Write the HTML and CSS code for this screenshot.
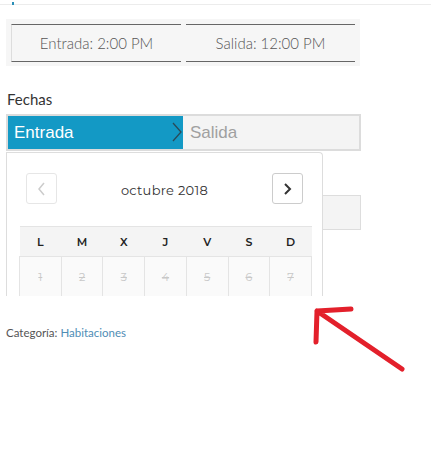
FILE: index.html
```html
<!DOCTYPE html>
<html lang="es">
<head>
<meta charset="utf-8">
<link rel="stylesheet" href="styles.css">
</head>
<body>
<div class="topbar"><span class="topmark"></span></div>
<div class="hours">
  <div class="hour">Entrada: 2:00 PM</div>
  <div class="hour">Salida: 12:00 PM</div>
</div>
<div class="form">
  <div class="label">Fechas</div>
  <div class="tabs">
    <div class="tab active">Entrada<svg class="chev" width="10" height="20" viewBox="0 0 10 20"><path d="M1 1 L9 10 L1 19" fill="none" stroke="#2a4a58" stroke-width="1.3"/></svg></div>
    <div class="tab">Salida</div>
    <div class="calendar">
      <div class="cal-head">
        <div class="nav disabled"><svg width="10" height="14" viewBox="0 0 10 14"><path d="M7 1 L2 7 L7 13" fill="none" stroke="#ccc" stroke-width="1.5"/></svg></div>
        <div class="month">octubre 2018</div>
        <div class="nav"><svg width="10" height="14" viewBox="0 0 10 14"><path d="M3 2 L8 7 L3 12" fill="none" stroke="#333" stroke-width="2"/></svg></div>
      </div>
      <table class="days">
        <thead><tr><th>L</th><th>M</th><th>X</th><th>J</th><th>V</th><th>S</th><th>D</th></tr></thead>
        <tbody>
          <tr><td>1</td><td>2</td><td>3</td><td>4</td><td>5</td><td>6</td><td>7</td></tr>
        </tbody>
      </table>
    </div>
  </div>
  <div class="field"></div>
  <div class="meta">Categoría: <a href="#">Habitaciones</a></div>
</div>
<svg class="arrow" width="120" height="90" viewBox="0 0 120 90"><path d="M28 72 L29 41 L63 39 M29 41 L114 99" fill="none" stroke="#e3202b" stroke-width="5" stroke-linecap="round" stroke-linejoin="round"/></svg>
</body>
</html>
```
FILE: styles.css
```css
html, body { margin: 0; padding: 0; background: #fff; }
body { font-family: "Lato", "Open Sans", sans-serif; color: #333; width: 431px; height: 459px; overflow: hidden; position: relative; }
.topbar { height: 4px; border-bottom: 1px solid #ececec; position: relative; }
.topmark { position: absolute; left: 12px; top: 2px; width: 2px; height: 3px; background: #2a8fb8; }
.hours { margin: 14px 0 0 6px; width: 344px; height: 37px; padding: 5px; background: #f6f6f6; display: flex; gap: 5px; }
.hour { flex: 0 0 170px; border-top: 1px solid #666; border-bottom: 1px solid #666; border-left: 1px solid #ddd; box-sizing: border-box; height: 38px; display: flex; align-items: center; justify-content: center; font-size: 15px; font-weight: 300; color: #555; }
.hour + .hour { border-left: none; flex-basis: 169px; }
.form { margin: 24px 0 0 6px; width: 355px; }
.label { font-size: 15px; color: #333; margin-left: 1px; line-height: 18px; }
.tabs { margin-top: 6px; height: 37px; border: 2px solid #dcdcdc; box-sizing: border-box; display: flex; background: #f4f4f4; position: relative; }
.tab { font-family: "Liberation Sans", Arial, sans-serif; font-size: 17px; color: #a0a0a0; display: flex; align-items: center; padding-left: 7px; }
.tab.active { width: 175px; box-sizing: border-box; padding-left: 6px; background: #1399c5; color: #fff; position: relative; }
.chev { position: absolute; right: 1px; top: 6px; }
.calendar { position: absolute; left: -2px; top: 36px; width: 317px; height: 144px; box-sizing: border-box; background: #fff; border: 1px solid #ddd; border-bottom: none; border-radius: 0 4px 0 0; overflow: hidden; z-index: 2; font-family: "Montserrat", "Open Sans", sans-serif; }
.cal-head { display: flex; align-items: center; justify-content: space-between; margin: 20px 19px 0 19px; }
.nav { width: 31px; height: 31px; box-sizing: border-box; border: 1px solid #ccc; border-radius: 3px; display: flex; align-items: center; justify-content: center; }
.nav.disabled { border-color: #e6e6e6; }
.month { font-size: 13px; color: #333; letter-spacing: 0.3px; padding-top: 3px; }
.days { border-collapse: collapse; margin: 22px 0 0 12px; width: 293px; table-layout: fixed; }
.days th { height: 29px; background: #f4f4f4; border-top: 1px solid #e4e4e4; font-size: 11px; font-weight: 600; color: #222; padding: 0; }
.days td { height: 46px; border: 1px solid #e4e4e4; border-bottom: none; text-align: center; vertical-align: top; padding-top: 13px; box-sizing: border-box; font-size: 11px; color: #c8c8c8; text-decoration: line-through; background: #fafafa; }
.field { margin-top: 44px; height: 35px; background: #f4f4f4; border: 1px solid #ddd; box-sizing: border-box; }
.meta { margin-top: 96px; font-size: 11.5px; color: #555; }
.meta a { color: #4f8db5; text-decoration: none; }
.arrow { position: absolute; left: 288px; top: 270px; overflow: visible; }
```
